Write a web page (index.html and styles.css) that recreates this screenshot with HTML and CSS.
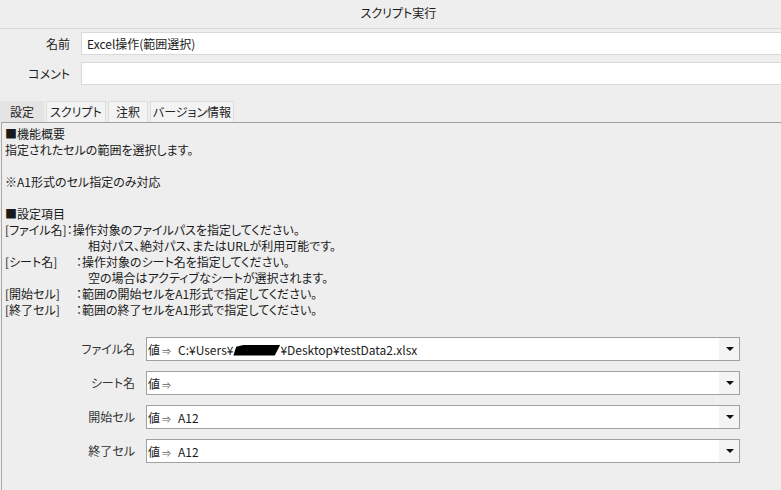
FILE: index.html
```html
<!DOCTYPE html>
<html lang="ja">
<head>
    <meta charset="UTF-8">
    <title>スクリプト実行</title>
    <link rel="stylesheet" href="styles.css">
</head>
<body>
    <div class="window">
        <div class="titlebar">スクリプト実行</div>

        <div class="fields">
            <div class="field">
                <label>名前</label>
                <div class="textbox">Excel操作(範囲選択)</div>
            </div>
            <div class="field">
                <label>コメント</label>
                <div class="textbox"></div>
            </div>
        </div>

        <div class="tabs">
            <div class="tab tab-settings active">設定</div>
            <div class="tab tab-script">スクリプト</div>
            <div class="tab tab-note">注釈</div>
            <div class="tab tab-version">バージョン情報</div>
        </div>

        <div class="panel">
            <div class="desc">
                <div>■機能概要</div>
                <div>指定されたセルの範囲を選択します。</div>
                <div class="blank"></div>
                <div>※A1形式のセル指定のみ対応</div>
                <div class="blank"></div>
                <div>■設定項目</div>
                <div><span class="key">[ファイル名]</span>：操作対象のファイルパスを指定してください。</div>
                <div class="cont">相対パス、絶対パス、またはURLが利用可能です。</div>
                <div><span class="key wide">[シート名]</span>：操作対象のシート名を指定してください。</div>
                <div class="cont">空の場合はアクティブなシートが選択されます。</div>
                <div><span class="key wide">[開始セル]</span>：範囲の開始セルをA1形式で指定してください。</div>
                <div><span class="key wide">[終了セル]</span>：範囲の終了セルをA1形式で指定してください。</div>
            </div>

            <div class="params">
                <label>ファイル名</label>
                <div class="combo">
                    <span class="prefix">値<small>⇒</small></span>
                    <span class="value">C:¥Users¥<span class="redacted"></span>¥Desktop¥testData2.xlsx</span>
                    <span class="drop"></span>
                </div>

                <label>シート名</label>
                <div class="combo">
                    <span class="prefix">値<small>⇒</small></span>
                    <span class="value"></span>
                    <span class="drop"></span>
                </div>

                <label>開始セル</label>
                <div class="combo">
                    <span class="prefix">値<small>⇒</small></span>
                    <span class="value">A12</span>
                    <span class="drop"></span>
                </div>

                <label>終了セル</label>
                <div class="combo">
                    <span class="prefix">値<small>⇒</small></span>
                    <span class="value">A12</span>
                    <span class="drop"></span>
                </div>
            </div>
        </div>
    </div>
</body>
</html>
```

FILE: styles.css
```css
body, html {
    margin: 0;
    height: 100%;
    background-color: #eeeeee;
    font-family: "Noto Sans CJK JP", "Noto Sans", sans-serif;
    font-size: 12px;
    font-feature-settings: "palt";
    color: #1a1a1a;
    overflow: hidden;
}
.window {
    display: flex;
    flex-direction: column;
    height: 100%;
}
.titlebar {
    height: 28px;
    line-height: 26px;
    padding-left: 16px;
    text-align: center;
    border-bottom: 1px solid #dadada;
}
.fields {
    display: flex;
    flex-direction: column;
    gap: 7px;
    padding-top: 3px;
}
.field {
    display: flex;
    align-items: center;
    gap: 11px;
}
.field label {
    width: 70px;
    text-align: right;
    color: #222;
}
.textbox {
    flex: 1;
    height: 21px;
    line-height: 21px;
    padding-left: 5px;
    background-color: #fff;
    border: 1px solid #d9d9d9;
    border-right: none;
}
.tabs {
    display: flex;
    gap: 2px;
    margin-top: 16px;
    height: 21px;
}
.tab {
    line-height: 20px;
    text-align: center;
    background-color: #f3f3f3;
    border: 1px solid #dddddd;
    border-bottom: none;
    box-sizing: border-box;
    color: #222;
}
.tab.active {
    background-color: #e4e4e4;
    border-color: #e4e4e4;
}
.tab-settings { width: 44px; }
.tab-script { width: 60px; }
.tab-note { width: 40px; }
.tab-version { width: 84px; }
.panel {
    flex: 1;
    margin-left: 1px;
    border-top: 1px solid #a0a0a0;
    border-left: 1px solid #a8a8a8;
}
.desc {
    padding: 3px 0 0 3px;
    line-height: 16px;
}
.desc .blank {
    height: 16px;
}
.key {
    display: inline-block;
    white-space: nowrap;
    min-width: 60px;
}
.key.wide {
    width: 71px;
}
.cont {
    padding-left: 83px;
}
.params {
    display: grid;
    grid-template-columns: 133px 1fr;
    column-gap: 11px;
    row-gap: 10px;
    margin: 19px 41px 0 0;
}
.params label {
    text-align: right;
    line-height: 24px;
    color: #333;
}
.combo {
    display: flex;
    align-items: center;
    height: 24px;
    box-sizing: border-box;
    background-color: #fff;
    border: 1px solid #a0a0a0;
}
.prefix {
    padding-left: 1px;
    width: 30px;
    color: #222;
}
.prefix small {
    font-size: 9px;
    color: #666;
    margin-left: 2px;
}
.value {
    flex: 1;
    white-space: nowrap;
}
.redacted {
    display: inline-block;
    width: 47px;
    height: 11px;
    vertical-align: -1px;
    background-color: #000;
    clip-path: polygon(6% 20%, 25% 0, 100% 0, 88% 100%, 0 100%, 3% 60%);
}
.drop {
    width: 20px;
    height: 100%;
    background-color: #f4f4f4;
    position: relative;
}
.drop::after {
    content: "";
    position: absolute;
    left: 7px;
    top: 9px;
    border-left: 4px solid transparent;
    border-right: 4px solid transparent;
    border-top: 4px solid #111;
}
```
